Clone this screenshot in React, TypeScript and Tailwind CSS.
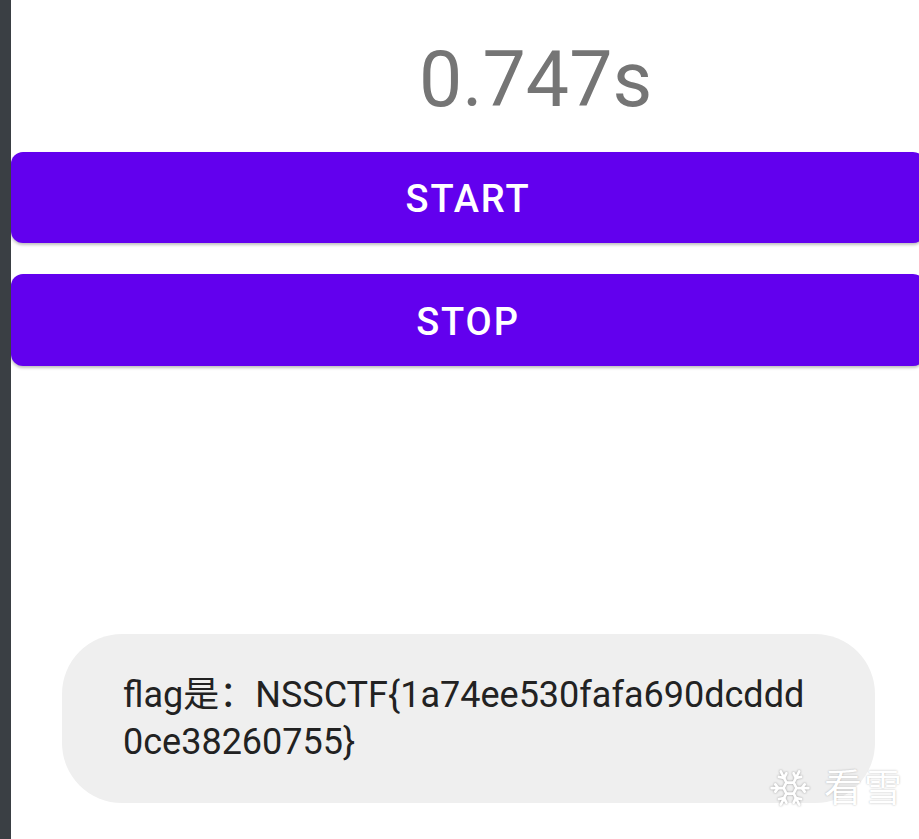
import React from 'react';
import { Snowflake } from 'lucide-react';

export default function App() {
  return (
    <div className="flex h-[839px] w-[919px] overflow-hidden bg-white font-['Roboto','Noto_Sans_CJK_SC',sans-serif]">
      <div className="w-[11px] shrink-0 bg-[#3a3f44]"></div>

      <div className="relative flex-1 overflow-hidden">
        <div className="mt-[42px] pl-[408px] text-[77px] leading-none text-[#757575]">0.747s</div>

        <button className="mt-[33px] flex h-[91px] w-[914px] items-center justify-center rounded-[12px] bg-[#6200ee] pt-[4px] text-[38px] font-medium tracking-[0.05em] text-white shadow-[0_2px_3px_rgba(0,0,0,0.25)]">
          START
        </button>
        <button className="mt-[31px] flex h-[92px] w-[914px] items-center justify-center rounded-[12px] bg-[#6200ee] pt-[4px] text-[38px] font-medium tracking-[0.05em] text-white shadow-[0_2px_3px_rgba(0,0,0,0.25)]">
          STOP
        </button>

        <div className="ml-[51px] mt-[268px] h-[169px] w-[813px] rounded-[60px] bg-[#efefef] pl-[61px] pt-[38px] text-[36px] leading-[47px] text-[#222222]">
          <div>flag是：NSSCTF{'{'}1a74ee530fafa690dcddd</div>
          <div>0ce38260755{'}'}</div>
        </div>

        <div className="absolute left-[757px] top-[766px] flex items-center gap-[12px]">
          <Snowflake className="h-[44px] w-[44px] text-white drop-shadow-[0_0_1px_rgba(0,0,0,0.35)]" strokeWidth={1.5} />
          <span className="text-[38px] leading-none tracking-[2px] text-white [text-shadow:0_0_2px_rgba(0,0,0,0.3)]">看雪</span>
        </div>
      </div>
    </div>
  );
}
